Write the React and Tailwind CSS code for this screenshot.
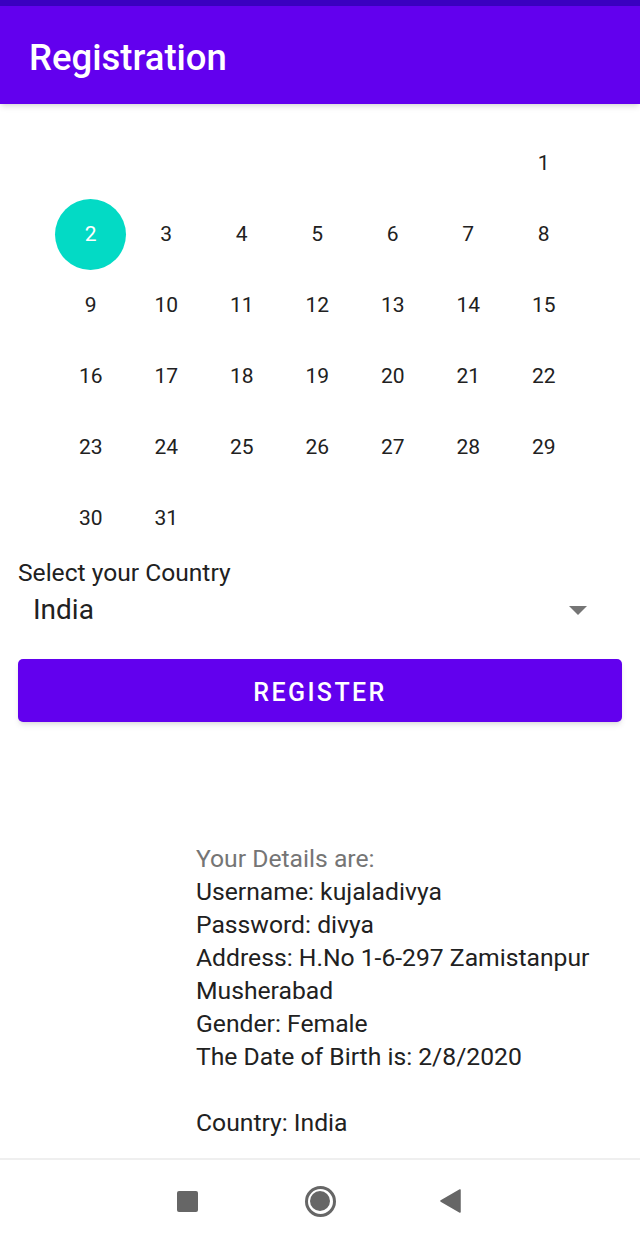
import React from "react";

// hari-hari dalam bulan, kolom pertama kosong sampai tanggal 1
const days = [
  null, null, null, null, null, null, 1,
  2, 3, 4, 5, 6, 7, 8,
  9, 10, 11, 12, 13, 14, 15,
  16, 17, 18, 19, 20, 21, 22,
  23, 24, 25, 26, 27, 28, 29,
  30, 31,
];

const details = [
  "Username: kujaladivya",
  "Password: divya",
  "Address: H.No 1-6-297 Zamistanpur Musherabad",
  "Gender: Female",
  "The Date of Birth is: 2/8/2020",
];

export default function App() {
  const selected = 2;

  return (
    <div
      className="w-[640px] h-[1242px] bg-white flex flex-col overflow-hidden"
      style={{ fontFamily: "Roboto, 'Noto Sans', sans-serif" }}
    >
      {/* status bar + toolbar */}
      <div className="h-[6px] bg-[#3a00c0]" />
      <div className="h-[98px] bg-[#6200ee] flex items-center px-[29px] shadow-md relative z-10">
        <h1 className="text-white text-[36.5px] font-medium pt-[6px]">
          Registration
        </h1>
      </div>

      {/* kalender */}
      <div className="pt-[24px] pl-[53px]">
        <div className="grid grid-cols-[repeat(7,75.5px)]">
          {days.map((d, i) => (
            <div key={i} className="h-[71px] flex items-center justify-center">
              {d &&
                (d === selected ? (
                  <div className="w-[71px] h-[71px] rounded-full bg-[#03dac5] flex items-center justify-center text-white text-[21px]">
                    {d}
                  </div>
                ) : (
                  <span className="text-[#212121] text-[21px]">{d}</span>
                ))}
            </div>
          ))}
        </div>
      </div>

      {/* pilih negara */}
      <div className="px-[18px] mt-[5px]">
        <p className="text-[#212121] text-[24.6px] leading-[28px]">
          Select your Country
        </p>
        <div className="mt-[5px] flex items-center justify-between pl-[15px] pr-[35px]">
          <span className="text-[#212121] text-[28px] leading-[36px]">India</span>
          <svg width="18" height="9" viewBox="0 0 18 9">
            <path d="M0 0 L18 0 L9 9 Z" fill="#757575" />
          </svg>
        </div>
        <button className="mt-[31px] w-full h-[63px] pt-[4px] rounded-[5px] bg-[#6200ee] text-white text-[25px] font-medium tracking-[2.4px] shadow-md">
          REGISTER
        </button>
      </div>

      {/* detail hasil registrasi */}
      <div className="mt-[120px] pl-[196px] w-[624px] text-[24.7px] leading-[33px] text-[#212121]">
        <p className="text-[#757575]">Your Details are:</p>
        {details.map((line) => (
          <p key={line}>{line}</p>
        ))}
        <p>&nbsp;</p>
        <p>Country: India</p>
      </div>

      {/* navigation bar */}
      <div className="mt-auto h-[84px] border-t-2 border-[#efefef] bg-white flex justify-center items-center">
        <div className="w-[133px] flex justify-center">
          <div className="w-[21px] h-[21px] rounded-[2px] bg-[#666666]" />
        </div>
        <div className="w-[133px] flex justify-center">
          <div className="w-[31px] h-[31px] rounded-full border-[3px] border-[#666666] flex items-center justify-center">
            <div className="w-[20px] h-[20px] rounded-full bg-[#666666]" />
          </div>
        </div>
        <div className="w-[133px] flex justify-center pr-[6px]">
          <svg width="21" height="24" viewBox="0 0 21 24">
            <path d="M20 1 L20 23 L1 12 Z" fill="#666666" strokeLinejoin="round" stroke="#666666" strokeWidth="1.5" />
          </svg>
        </div>
      </div>
    </div>
  );
}
